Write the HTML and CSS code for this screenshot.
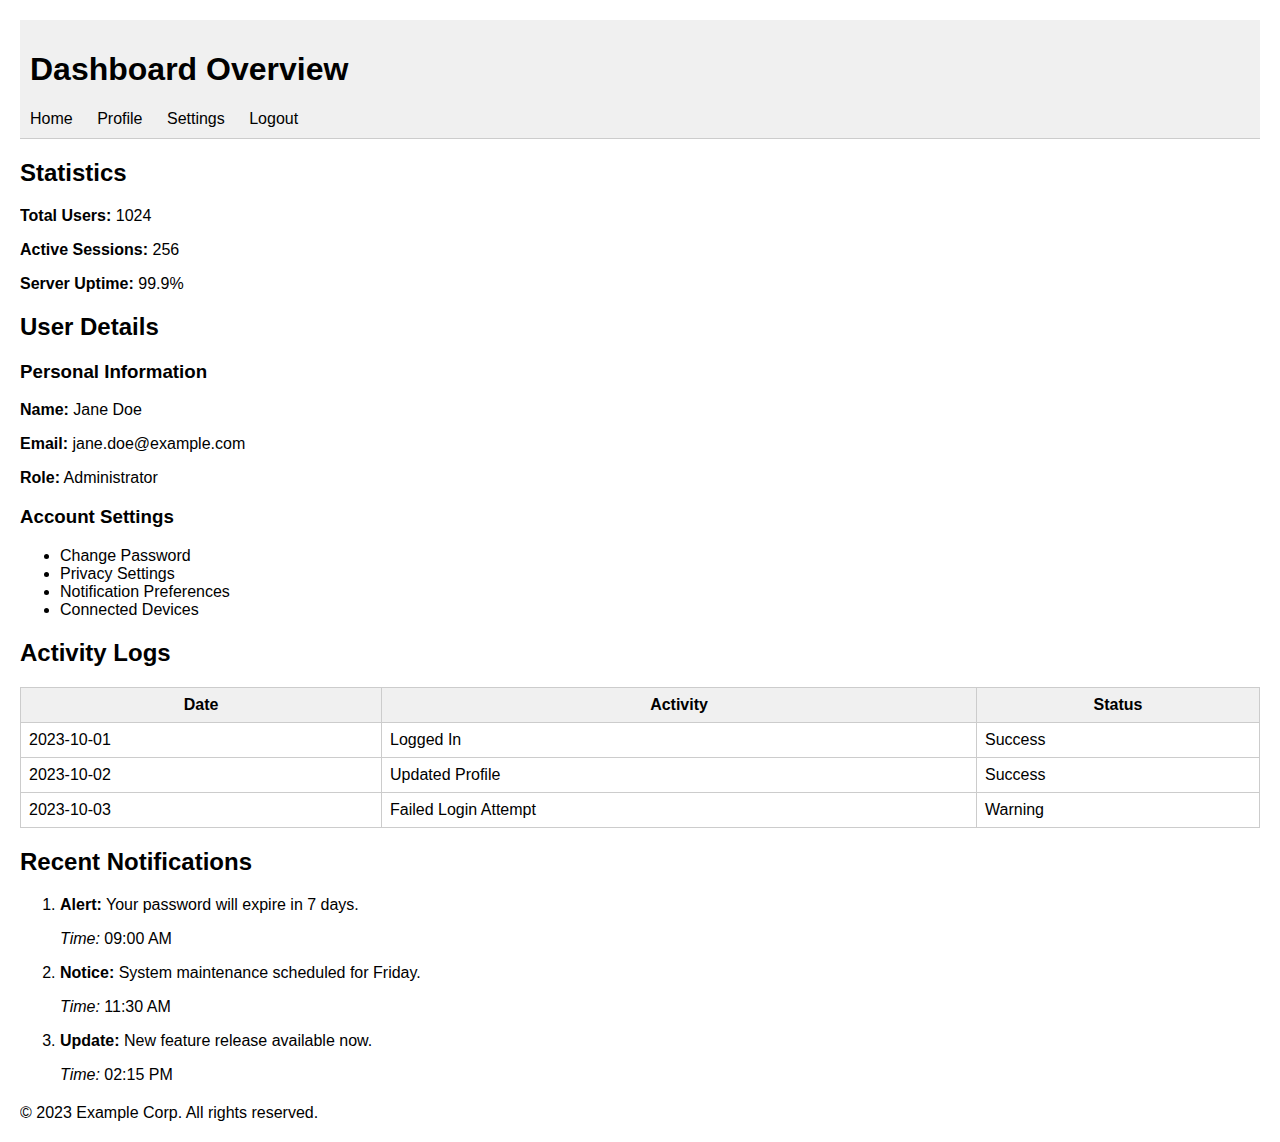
FILE: index.html
```html
<!DOCTYPE html>
<html lang="en">
<head>
<meta charset="utf-8">
<title>Dashboard Overview</title>
<link rel="stylesheet" href="styles.css">
</head>
<body>
<header class="site-header">
  <h1>Dashboard Overview</h1>
  <nav class="main-nav">
    <a href="#">Home</a>
    <a href="#">Profile</a>
    <a href="#">Settings</a>
    <a href="#">Logout</a>
  </nav>
</header>
<main>
  <section>
    <h2>Statistics</h2>
    <p><strong>Total Users:</strong> 1024</p>
    <p><strong>Active Sessions:</strong> 256</p>
    <p><strong>Server Uptime:</strong> 99.9%</p>
  </section>
  <section>
    <h2>User Details</h2>
    <h3>Personal Information</h3>
    <p><strong>Name:</strong> Jane Doe</p>
    <p><strong>Email:</strong> jane.doe@example.com</p>
    <p><strong>Role:</strong> Administrator</p>
    <h3>Account Settings</h3>
    <ul>
      <li>Change Password</li>
      <li>Privacy Settings</li>
      <li>Notification Preferences</li>
      <li>Connected Devices</li>
    </ul>
  </section>
  <section>
    <h2>Activity Logs</h2>
    <table class="log-table">
      <thead>
        <tr><th>Date</th><th>Activity</th><th>Status</th></tr>
      </thead>
      <tbody>
        <tr><td>2023-10-01</td><td>Logged In</td><td>Success</td></tr>
        <tr><td>2023-10-02</td><td>Updated Profile</td><td>Success</td></tr>
        <tr><td>2023-10-03</td><td>Failed Login Attempt</td><td>Warning</td></tr>
      </tbody>
    </table>
  </section>
  <section>
    <h2>Recent Notifications</h2>
    <ol>
      <li>
        <p><strong>Alert:</strong> Your password will expire in 7 days.</p>
        <p><em>Time:</em> 09:00 AM</p>
      </li>
      <li>
        <p><strong>Notice:</strong> System maintenance scheduled for Friday.</p>
        <p><em>Time:</em> 11:30 AM</p>
      </li>
      <li>
        <p><strong>Update:</strong> New feature release available now.</p>
        <p><em>Time:</em> 02:15 PM</p>
      </li>
    </ol>
  </section>
</main>
<footer class="site-footer">
  <p>&copy; 2023 Example Corp. All rights reserved.</p>
</footer>
</body>
</html>
```
FILE: styles.css
```css
body {
  margin: 20px;
  font-family: "Liberation Sans", Arial, sans-serif;
  font-size: 16px;
  color: #000;
  background: #fff;
}

.site-header {
  background: #f0f0f0;
  padding: 10px;
  border-bottom: 1px solid #ccc;
}

.site-header h1 {
  font-size: 32px;
  margin: 21.44px 0;
}

.main-nav a {
  color: #000;
  text-decoration: none;
  margin-right: 20px;
}

h2 {
  font-size: 24px;
  margin: 19.92px 0;
}

h3 {
  font-size: 18.72px;
  margin: 18.72px 0;
}

p {
  margin: 16px 0;
}

ul, ol {
  margin: 16px 0;
  padding-left: 40px;
}

.log-table {
  width: 100%;
  border-collapse: collapse;
  margin-top: 20.5px;
}

.log-table th,
.log-table td {
  border: 1px solid #ccc;
  padding: 8px;
  text-align: left;
}

.log-table th {
  background: #f0f0f0;
  text-align: center;
}

.site-footer {
  margin-top: 20px;
}
```
